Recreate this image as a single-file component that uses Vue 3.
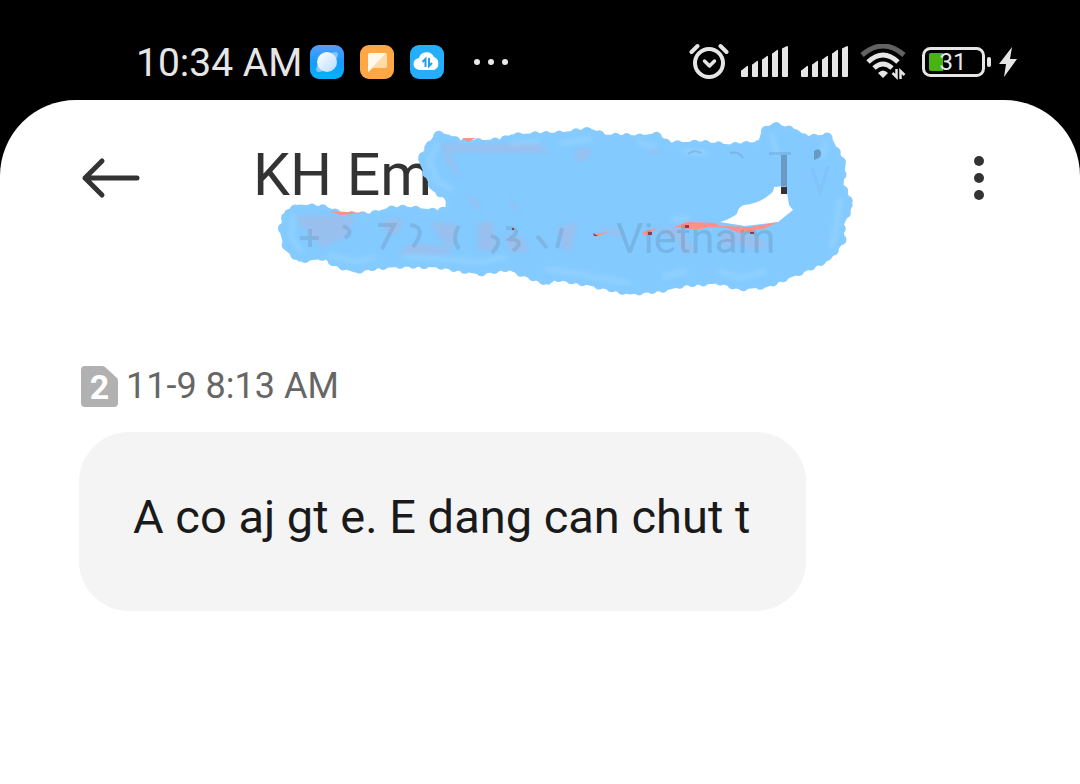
<script setup>
const message = 'A co aj gt e. E dang can chut t'
const outline = 'M431 146L438 136L448 138L460 144L500 143L512 138L530 137L560 136L590 132L605 138L640 139L656 137L668 146L700 145L730 148L761 145L765 132L774 127L796 133L805 140L828 138L833 148L842 165L840 185L849 205L840 225L841 240L828 257L800 270L765 284L740 286L720 280L685 282L665 287L630 291L590 282L555 276L548 281L520 271L508 266L480 271L440 264L405 263L375 265L355 269L335 262L325 255L300 258L288 248L283 230L288 213L300 208L325 210L340 216L370 217L390 211L405 210L440 214L452 207L447 196L435 188L430 178L422 160Z'
const gap = 'M720 222Q730 219 737 214Q738 207 744 205Q760 203 769 195Q774 192 774 187L786 186L789 205L793 210L778 222L745 226Z'
const signalBars = [
  'M1 30v-5q0-1 1-1l5-4q1-1 1 1v9q0 1-1 1H2q-1 0-1-1z',
  'M12 30V19q0-1 1-1l4-3q1-1 1 1v14q0 1-1 1h-4q-1 0-1-1z',
  'M22 30V14q0-1 1-1l4-3q1-1 1 1v19q0 1-1 1h-4q-1 0-1-1z',
  'M32 30V8q0-1 1-1l4-3q1-1 1 1v25q0 1-1 1h-4q-1 0-1-1z',
  'M42 30V3q0-1 1-1l4-2q1 0 1 1v29q0 1-1 1h-4q-1 0-1-1z'
]
</script>

<template>
  <div class="phone">
    <div class="status">
      <div class="side">
        <time class="clock">10:34 AM</time>
        <div class="apps">
          <svg width="34" height="34" viewBox="0 0 34 34" aria-hidden="true">
            <defs>
              <linearGradient id="sky" x1="0" y1="0" x2="0" y2="1"><stop stop-color="#5a9df8" /><stop offset=".5" stop-color="#159cfb" /><stop offset="1" stop-color="#08b1ff" /></linearGradient>
              <linearGradient id="moon" x1="0" y1="0" x2="1" y2="1"><stop stop-color="#fff" /><stop offset="1" stop-color="#b9dcff" /></linearGradient>
            </defs>
            <rect width="34" height="34" rx="9" fill="url(#sky)" />
            <ellipse cx="17" cy="17" rx="14" ry="5" transform="rotate(-42 17 17)" fill="#82c7ff" />
            <circle cx="17" cy="17" r="10" fill="url(#moon)" />
          </svg>
          <svg width="34" height="34" viewBox="0 0 34 34" aria-hidden="true">
            <rect width="34" height="34" rx="9" fill="#ffa744" />
            <path d="M10 8h15q2 0 2 2v11q0 2-2 2H13l-5 4V10q0-2 2-2z" fill="#ffdca8" />
            <path d="M10 8h16L8 27V10q0-2 2-2z" fill="#fff8ec" />
          </svg>
          <svg width="34" height="34" viewBox="0 0 34 34" aria-hidden="true">
            <rect width="34" height="34" rx="9" fill="#24aefb" />
            <path d="M10 25a5 5 0 0 1-1-12 8 8 0 0 1 15-1 7 7 0 0 1 0 13z" fill="#fff" />
            <path d="M12.500 17l3-3v8M19 13v8l3-3" fill="none" stroke="#249ee9" stroke-width="2" />
          </svg>
        </div>
        <svg width="36" height="8" viewBox="0 0 36 8" fill="#e8e8e8" aria-hidden="true"><circle cx="4" cy="4" r="3" /><circle cx="18" cy="4" r="3" /><circle cx="32" cy="4" r="3" /></svg>
      </div>
      <div class="system">
        <svg width="40" height="38" viewBox="0 0 40 38" fill="none" stroke="#e6e6e6" stroke-linecap="round" aria-hidden="true">
          <circle cx="20" cy="20" r="14" stroke-width="4" />
          <path d="M2.500 9l6-6M31.500 3l6 6" stroke-width="4" />
          <path d="M15.500 18l5 5 5-5" stroke-width="3.500" stroke-linejoin="round" />
        </svg>
        <svg v-for="n in 2" :key="n" width="49" height="32" viewBox="0 0 49 32" fill="#e6e6e6" aria-hidden="true"><path v-for="bar in signalBars" :key="bar" :d="bar" /></svg>
        <svg width="47" height="36" viewBox="0 0 47 36" fill="none" aria-hidden="true">
          <path d="M2 11Q23-7 44 11" stroke="#626262" stroke-width="5" />
          <path d="M8 18Q23 4 38 18M14 24Q23 16 32 24" stroke="#e6e6e6" stroke-width="5" />
          <path d="M18 29q5-5 10 0l-5 5z" fill="#e6e6e6" />
          <path d="M32.500 29l4 4v-8M40.500 35v-8l4 4" stroke="#e6e6e6" stroke-width="2.500" />
        </svg>
        <div class="battery">
          <svg width="70" height="30" viewBox="0 0 70 30" aria-hidden="true">
            <rect x="1.500" y="1.500" width="60" height="27" rx="7" fill="none" stroke="#e6e6e6" stroke-width="3" />
            <path d="M9 6h12v18H9q-2 0-2-2V8q0-2 2-2z" fill="#4bb30f" />
            <rect x="65" y="10" width="4" height="10" rx="2" fill="#e6e6e6" />
          </svg>
          <span>31</span>
        </div>
        <svg width="20" height="32" viewBox="0 0 20 32" fill="#e6e6e6" aria-hidden="true"><path d="M14 1L1 18h7L6 31 19 13h-7z" /></svg>
      </div>
    </div>

    <main class="sheet">
      <header class="top">
        <button class="icon" aria-label="Back">
          <svg width="60" height="42" viewBox="0 0 60 42" fill="none" stroke="#333" stroke-width="5" stroke-linecap="round" stroke-linejoin="round"><path d="M21 4L4 21l17 17M4 21h52" /></svg>
        </button>
        <h1>KH Em</h1>
        <button class="icon more" aria-label="More options">
          <svg width="12" height="46" viewBox="0 0 12 46" fill="#333"><circle cx="6" cy="6" r="5" /><circle cx="6" cy="23" r="5" /><circle cx="6" cy="40" r="5" /></svg>
        </button>
        <svg class="scribble" width="580" height="180" viewBox="275 120 580 180" aria-hidden="true">
          <defs>
            <filter id="soft" x="-10%" y="-10%" width="120%" height="120%"><feGaussianBlur stdDeviation="2" /></filter>
          </defs>
          <g fill="none" stroke="#86cbff" stroke-linecap="round">
            <path :d="outline" stroke-width="7" />
            <path :d="outline" stroke-width="11" stroke-dasharray="0 13 0 17 0 11" />
          </g>
          <path fill-rule="evenodd" fill="#82caff" :d="outline + gap" />
          <path d="M781 187h6v7h-6z" fill="#333" />
          <g fill="none" stroke="#a2d8fe" stroke-width="7" stroke-linecap="round" opacity=".4" filter="url(#soft)">
            <path d="M437 145l-8 16 8 20 14 8M294 217l-3 20 10 14M330 256l27 6 16-5M405 256l75 6 25-4M548 269l42 7 38 7M665 276l20-5M720 272l22 6 22-6M562 143l28-4M772 135l4 18M825 143l-2 12M840 200l-3 24-5 22M675 220l12-2M512 144l24-2M640 143l14 4M685 151l20 2" />
          </g>
          <g fill="#aeb6df" opacity=".5" filter="url(#soft)">
            <path d="M441 144l100 0 8 9-100-1 12 26-14-14zM295 215l60 1-8 20-24 12-22-22zM385 219l20 0-8 16-14-4zM430 222l28 2-5 22-12-6zM478 222l15 0 4 28-20 1z" />
            <path d="M575 149h18l-8 12h-8zM650 149h9v5h-9zM465 196l16 18-4-14zM511 196l9 18-8-7zM410 244l40 2v8h-54zM505 234l18 4 6 14h-20zM558 227l20-5-8 32-8-6zM596 228l20 0 8 10-10-2zM650 228l30 0 16 24-12 2-8-14zM718 232l36 2 16 12-20 4-12-8-14 6z" />
          </g>
          <g fill="#ff9088">
            <path d="M462 138h14l-8 4zM330 211l36 2-26 2zM594 234l14-2-12 5zM642 232l15-4-12 8zM674 227l13-5 28 1 5 3 31 1 28-5-16 7-24 4-12-5-18-1-12 3z" />
          </g>
          <g fill="none" stroke="#7084a4" stroke-width="4" opacity=".28">
            <path d="M300 238h19M310 229v18M343 226q12 5 2 12M378 225h16l-12 24M410 225q18 2 3 22M459 226q-8 12 0 23M491 236q14 3 1 17M506 228q18 0 4 11 16 2 3 12M537 236l10 12M562 228l-5 20" />
            <path d="M688 154q6-5 13-1M730 153q9-2 13 5" stroke-width="2" />
            <path d="M812 168l8 24 8-26" stroke-width="3" opacity=".3" />
          </g>
          <g fill="#405064">
            <text class="country" x="616" y="253" opacity=".17">Vietnam</text>
            <path d="M769 152h22v3h-22z" opacity=".15" />
            <path d="M781 155h6v32h-6z" opacity=".38" />
            <path d="M814 151q5-4 7 1t-7 8z" opacity=".4" />
          </g>
          <path d="M512 228h2v2h-2zM593 233l5 3h-4zM648 232h4v3h-4zM685 225h4v3h-4zM750 232h4v2h-4z" fill="#8f3b4d" />
        </svg>
      </header>

      <section class="conversation">
        <div class="stamp">
          <span class="sim"><svg width="37" height="41" viewBox="0 0 37 41" aria-hidden="true"><path d="M4 0h17q2 0 3 1l12 11q1 1 1 3v22q0 4-4 4H4q-4 0-4-4V4q0-4 4-4z" fill="#b1b1b1" /></svg><b>2</b></span>
          <time>11-9 8:13 AM</time>
        </div>
        <p class="bubble">{{ message }}</p>
      </section>
    </main>
  </div>
</template>

<style>
body { margin: 0; background: #000; }
</style>

<style scoped>
.phone { min-height: 100vh; display: flex; flex-direction: column; background: #000; font-family: Roboto, "Noto Sans", sans-serif; }
.status { height: 76px; padding: 24px 62px 0 136px; display: flex; align-items: center; justify-content: space-between; }
.side, .apps, .system { display: flex; align-items: center; }
.clock { width: 174px; padding-top: 2px; color: #e6e6e6; font-size: 39px; line-height: 48px; white-space: nowrap; }
.apps { gap: 16px; margin-right: 29px; }
.system { gap: 11px; }
.battery { position: relative; display: flex; margin: 0 -5px 0 4px; }
.battery span { position: absolute; inset: 0 8px 0 0; text-align: center; color: #e6e6e6; font-size: 24px; line-height: 30px; }
.sheet { flex: 1; background: #fff; border-radius: 76px 76px 0 0; }
.top { position: relative; display: flex; align-items: center; height: 156px; padding: 0 95px 0 81px; }
.icon { display: flex; padding: 0; border: 0; background: none; }
.more { margin-left: auto; }
h1 { margin: 0 0 6px 112px; color: #333; font-size: 59px; line-height: 64px; font-weight: 400; white-space: nowrap; }
.scribble { position: absolute; left: 275px; top: 20px; }
.country { font-size: 43px; }
.conversation { padding: 104px 80px 0 79px; }
.stamp { display: flex; align-items: center; gap: 8px; padding-left: 2px; height: 52px; color: #666; font-size: 36px; }
.sim { position: relative; display: flex; }
.sim b { position: absolute; inset: 0; text-align: center; color: #fff; font-size: 34px; line-height: 42px; }
.bubble { box-sizing: border-box; width: fit-content; max-width: 100%; margin: 20px 0 0; padding: 53px 56px 62px 54px; border-radius: 50px; background: #f4f4f4; color: #1a1a1a; font-size: 47px; line-height: 64px; }
</style>
